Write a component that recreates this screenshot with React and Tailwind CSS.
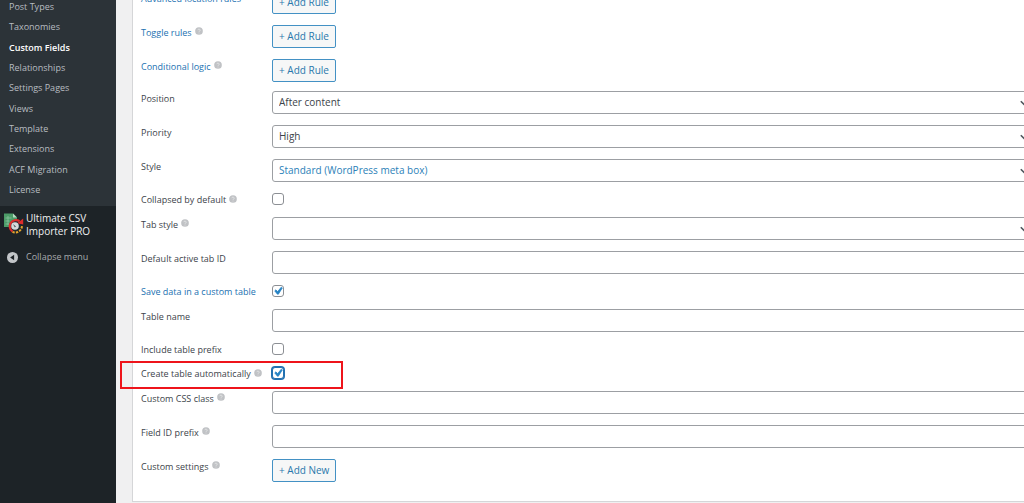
import React, { useId } from "react";

const menu = [
  "Post Types",
  "Taxonomies",
  "Custom Fields",
  "Relationships",
  "Settings Pages",
  "Views",
  "Template",
  "Extensions",
  "ACF Migration",
  "License",
];

const ruleRows = [
  { label: "Advanced location rules", type: "button", text: "+ Add Rule", link: true },
  { label: "Toggle rules", type: "button", text: "+ Add Rule", link: true, help: true },
  { label: "Conditional logic", type: "button", text: "+ Add Rule", link: true, help: true },
];

const settingRows = [
  { label: "Position", type: "select", options: ["After content", "After title", "Side"] },
  { label: "Priority", type: "select", options: ["High", "Low"] },
  {
    label: "Style",
    type: "select",
    options: ["Standard (WordPress meta box)", "Seamless (no meta box)"],
    active: true,
  },
  { label: "Collapsed by default", type: "checkbox", help: true },
  { label: "Tab style", type: "select", options: ["", "Box", "Left"], help: true },
  { label: "Default active tab ID", type: "text" },
  { label: "Save data in a custom table", type: "checkbox", checked: true, link: true },
  { label: "Table name", type: "text" },
  { label: "Include table prefix", type: "checkbox" },
  {
    label: "Create table automatically",
    type: "checkbox",
    checked: true,
    help: true,
    focused: true,
    highlight: true,
  },
  { label: "Custom CSS class", type: "text", help: true },
  { label: "Field ID prefix", type: "text", help: true },
  { label: "Custom settings", type: "button", text: "+ Add New", help: true },
];

function HelpIcon() {
  return (
    <svg viewBox="0 0 10 10" className="size-2 shrink-0" aria-hidden="true">
      <circle cx="5" cy="5" r="4.8" fill="#c0c2c5" />
      <path
        d="M3.6 4a1.4 1.4 0 1 1 2.1 1.2c-.5.3-.7.5-.7 1"
        fill="none"
        stroke="#eceded"
        strokeWidth=".9"
      />
      <circle cx="5" cy="7.6" r=".6" fill="#eceded" />
    </svg>
  );
}

function Checkbox({ id, checked, focused }) {
  return (
    <span className="relative flex size-3">
      <input
        id={id}
        type="checkbox"
        defaultChecked={checked}
        className={
          focused
            ? "peer size-3 appearance-none rounded-[3px] border border-[#2271b1] bg-white ring-1 ring-[#2271b1]"
            : "peer size-3 appearance-none rounded-[3px] border border-[#8c8f94] bg-white"
        }
      />
      <svg
        viewBox="0 0 20 20"
        className="pointer-events-none absolute inset-0 hidden size-3 peer-checked:block"
        aria-hidden="true"
      >
        <path
          d="M15.4 3.6l1.8 1.3-6.6 10.4H9L4.6 9.8l1.8-1.7 3.1 2.9z"
          fill="#2583c4"
          stroke="#2583c4"
          strokeWidth="1.2"
        />
      </svg>
    </span>
  );
}

function Control({ id, row }) {
  if (row.type === "button") {
    return (
      <button
        id={id}
        type="button"
        className="h-[23px] rounded-xs border border-[#4391c4] bg-[#f6f7f7] px-1.5 text-[10px] leading-[21px] text-[#2a77ac]"
      >
        {row.text}
      </button>
    );
  }
  if (row.type === "checkbox") {
    return <Checkbox id={id} checked={row.checked} focused={row.focused} />;
  }
  if (row.type === "select") {
    return (
      <span className="relative block w-full">
        <select
          id={id}
          className={
            row.active
              ? "block h-[23px] w-full appearance-none rounded-[3px] border border-[#9c9fa3] bg-white px-1.5 text-[10px] text-[#2c7fb8]"
              : "block h-[23px] w-full appearance-none rounded-[3px] border border-[#9c9fa3] bg-white px-1.5 text-[10px] text-[#3c434a]"
          }
        >
          {row.options.map((option) => (
            <option key={option}>{option}</option>
          ))}
        </select>
        <svg
          viewBox="0 0 8 6"
          className="pointer-events-none absolute top-[9px] right-[11px] h-1.5 w-2"
          aria-hidden="true"
        >
          <path d="M.8 1.2 4 4.4l3.2-3.2" fill="none" stroke="#50575e" strokeWidth="1.6" />
        </svg>
      </span>
    );
  }
  return (
    <input
      id={id}
      type="text"
      className="block h-[23px] w-full rounded-[3px] border border-[#9c9fa3] bg-white px-1.5 text-[10px] text-[#3c434a]"
    />
  );
}

function Row({ row }) {
  const id = useId();
  return (
    <div
      className={
        row.type === "checkbox" ? "relative flex h-[13px] items-start" : "relative flex h-[23px] items-start"
      }
    >
      <div
        className={
          row.type === "checkbox"
            ? "flex w-[131px] shrink-0 gap-[3px] leading-[13px]"
            : "flex w-[131px] shrink-0 gap-[3px] leading-[15px]"
        }
      >
        <label
          htmlFor={id}
          className={
            row.link
              ? "text-[9px] leading-[inherit] whitespace-nowrap text-[#2271b1]"
              : "text-[9px] leading-[inherit] whitespace-nowrap text-[#3c434a]"
          }
        >
          {row.label}
        </label>
        {row.help && (
          <span className="flex h-3 items-center">
            <HelpIcon />
          </span>
        )}
      </div>
      <div className="flex min-w-0 flex-1">
        <Control id={id} row={row} />
      </div>
      {row.highlight && (
        <span className="pointer-events-none absolute -top-1.5 -left-[21px] h-7 w-[223px] border-2 border-[#ee141b]" />
      )}
    </div>
  );
}

function RowGroup({ rows }) {
  return (
    <div className="flex flex-col gap-[11px]">
      {rows.map((row) => (
        <Row key={row.label} row={row} />
      ))}
    </div>
  );
}

function ImporterIcon() {
  return (
    <svg viewBox="0 0 20 22" className="h-[22px] w-5 shrink-0" aria-hidden="true">
      <path d="M0 1.5h9l4 4V15H0z" fill="#4c9c68" />
      <path d="M9 1.5v4h4z" fill="#b5d8c0" />
      <path d="M1.5 6h6M1.5 9h4M1.5 12h4M4 4v9" stroke="#8cc3a0" strokeWidth=".8" />
      <circle cx="11" cy="14" r="6" fill="#22292e" />
      <path d="M8.5 19.6A6.2 6.2 0 0 1 15.5 9.2" fill="none" stroke="#dc2c2c" strokeWidth="2.2" />
      <path d="M13.2 11.2 19.2 12.4V6.6z" fill="#dc2c2c" />
      <path
        d="M18 14.2A6.8 6.8 0 0 1 8.5 19.9"
        fill="none"
        stroke="#e5a52c"
        strokeWidth="2"
        strokeDasharray="2.4 1.1"
      />
      <circle cx="11" cy="14" r="3.8" fill="#d6d9da" />
      <path d="m9 12 3 2.5-1.2 1z" fill="#4b5257" />
    </svg>
  );
}

export default function App() {
  return (
    <div className="flex min-h-screen overflow-hidden bg-[#f0f0f1] font-['Open_Sans','Noto_Sans',sans-serif]">
      <nav className="w-29 shrink-0 bg-[#1d2327]" aria-label="Admin menu">
        <ul className="-mt-[3px] flex h-[209px] flex-col justify-between bg-[#2c3338] pb-1.5 pl-[9px]">
          {menu.map((item) => (
            <li key={item} className="flex">
              <a
                href="#"
                className={
                  item === "Custom Fields"
                    ? "text-[9px] leading-5 font-semibold text-white"
                    : "text-[9px] leading-5 text-[#b8bdc1]"
                }
              >
                {item}
              </a>
            </li>
          ))}
        </ul>
        <a href="#" className="flex gap-0.5 pt-1.5 pl-1 text-[10px] leading-[13px] text-[#f0f0f1]">
          <ImporterIcon />
          <span>
            Ultimate CSV
            <br />
            Importer PRO
          </span>
        </a>
        <button
          type="button"
          className="mt-[11px] flex items-center gap-2 pl-[7px] text-[9px] leading-4 text-[#a7aaad]"
        >
          <svg viewBox="0 0 12 12" className="size-[11px]" aria-hidden="true">
            <circle cx="6" cy="6" r="6" fill="#c3c6c9" />
            <path d="M7.8 3v6L3.4 6z" fill="#1d2327" />
          </svg>
          Collapse menu
        </button>
      </nav>
      <main className="min-w-0 flex-1 overflow-hidden pl-4">
        <form className="-mt-2.5 -mr-4 flex flex-col gap-[9px] border border-[#d5d6d8] bg-white pb-[19px] pl-2">
          <RowGroup rows={ruleRows} />
          <RowGroup rows={settingRows} />
        </form>
      </main>
    </div>
  );
}
